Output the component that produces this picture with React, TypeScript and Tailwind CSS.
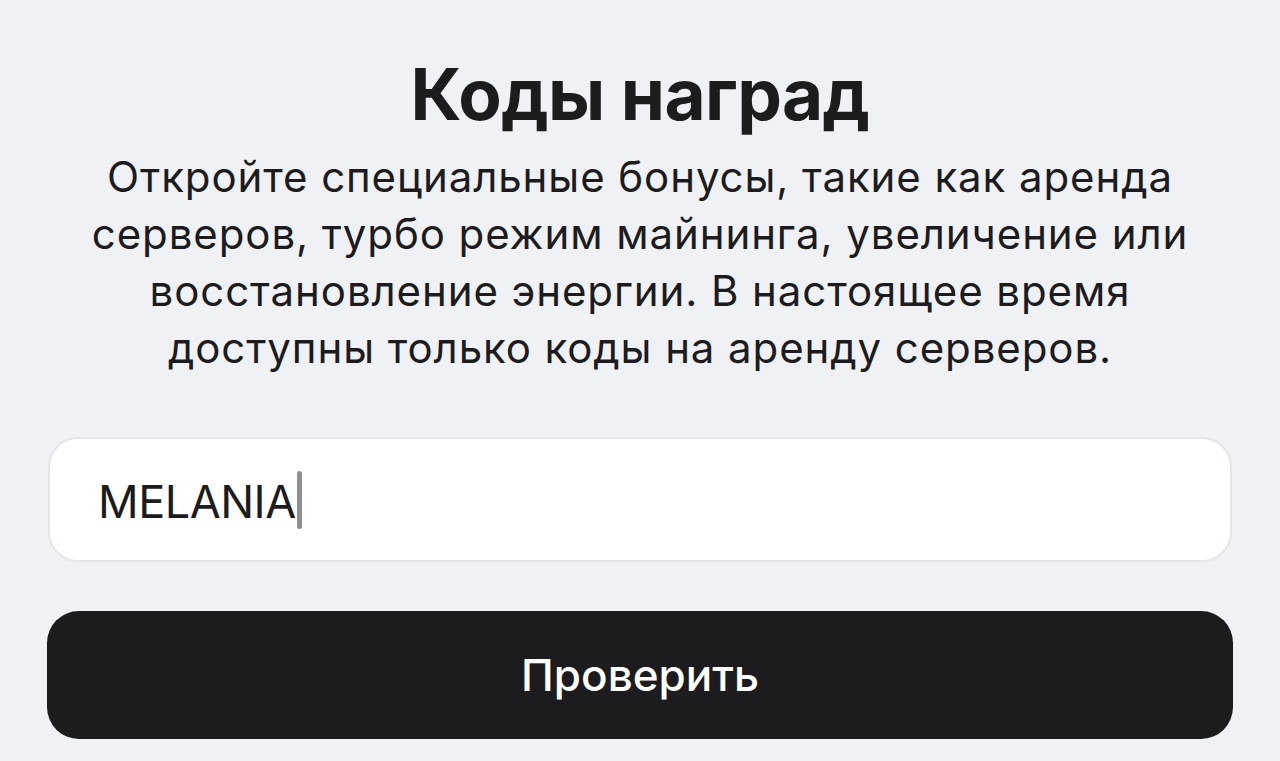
import React, { useState } from "react";

export default function App() {
  const [code, setCode] = useState("MELANIA");

  return (
    <div
      className="min-h-[761px] w-full bg-[#f0f1f5] text-[#1c1c1e] overflow-hidden"
      style={{ fontFamily: "Inter, 'Noto Sans', sans-serif" }}
    >
      <div className="px-[47px] pt-[46px]">
        <h1 className="text-center text-[71px] leading-[96px] font-bold tracking-[-0.6px]">Коды наград</h1>
        <p className="mt-[6px] text-center text-[42px] leading-[57px] tracking-[0.9px] text-[#1c1c1e] px-[28px]">
          Откройте специальные бонусы, такие как аренда серверов, турбо режим майнинга, увеличение или
          восстановление энергии. В настоящее время доступны только коды на аренду серверов.
        </p>

        <div className="mt-[61px] h-[125px] mx-[1px] rounded-[30px] bg-white border-2 border-[#e4e5ea] flex items-center px-[48px]">
          <div className="flex items-center">
            <span className="text-[45px] leading-none tracking-[-0.5px] pt-[3px]">{code}</span>
            <span className="ml-[1px] h-[58px] w-[5px] rounded-full bg-[#8e8e93]" />
          </div>
          <input className="hidden" value={code} onChange={(e) => setCode(e.target.value)} />
        </div>

        <button className="mt-[49px] w-full h-[128px] rounded-[32px] bg-[#1c1c1e] text-white text-[44px] font-medium">
          Проверить
        </button>
      </div>
    </div>
  );
}
